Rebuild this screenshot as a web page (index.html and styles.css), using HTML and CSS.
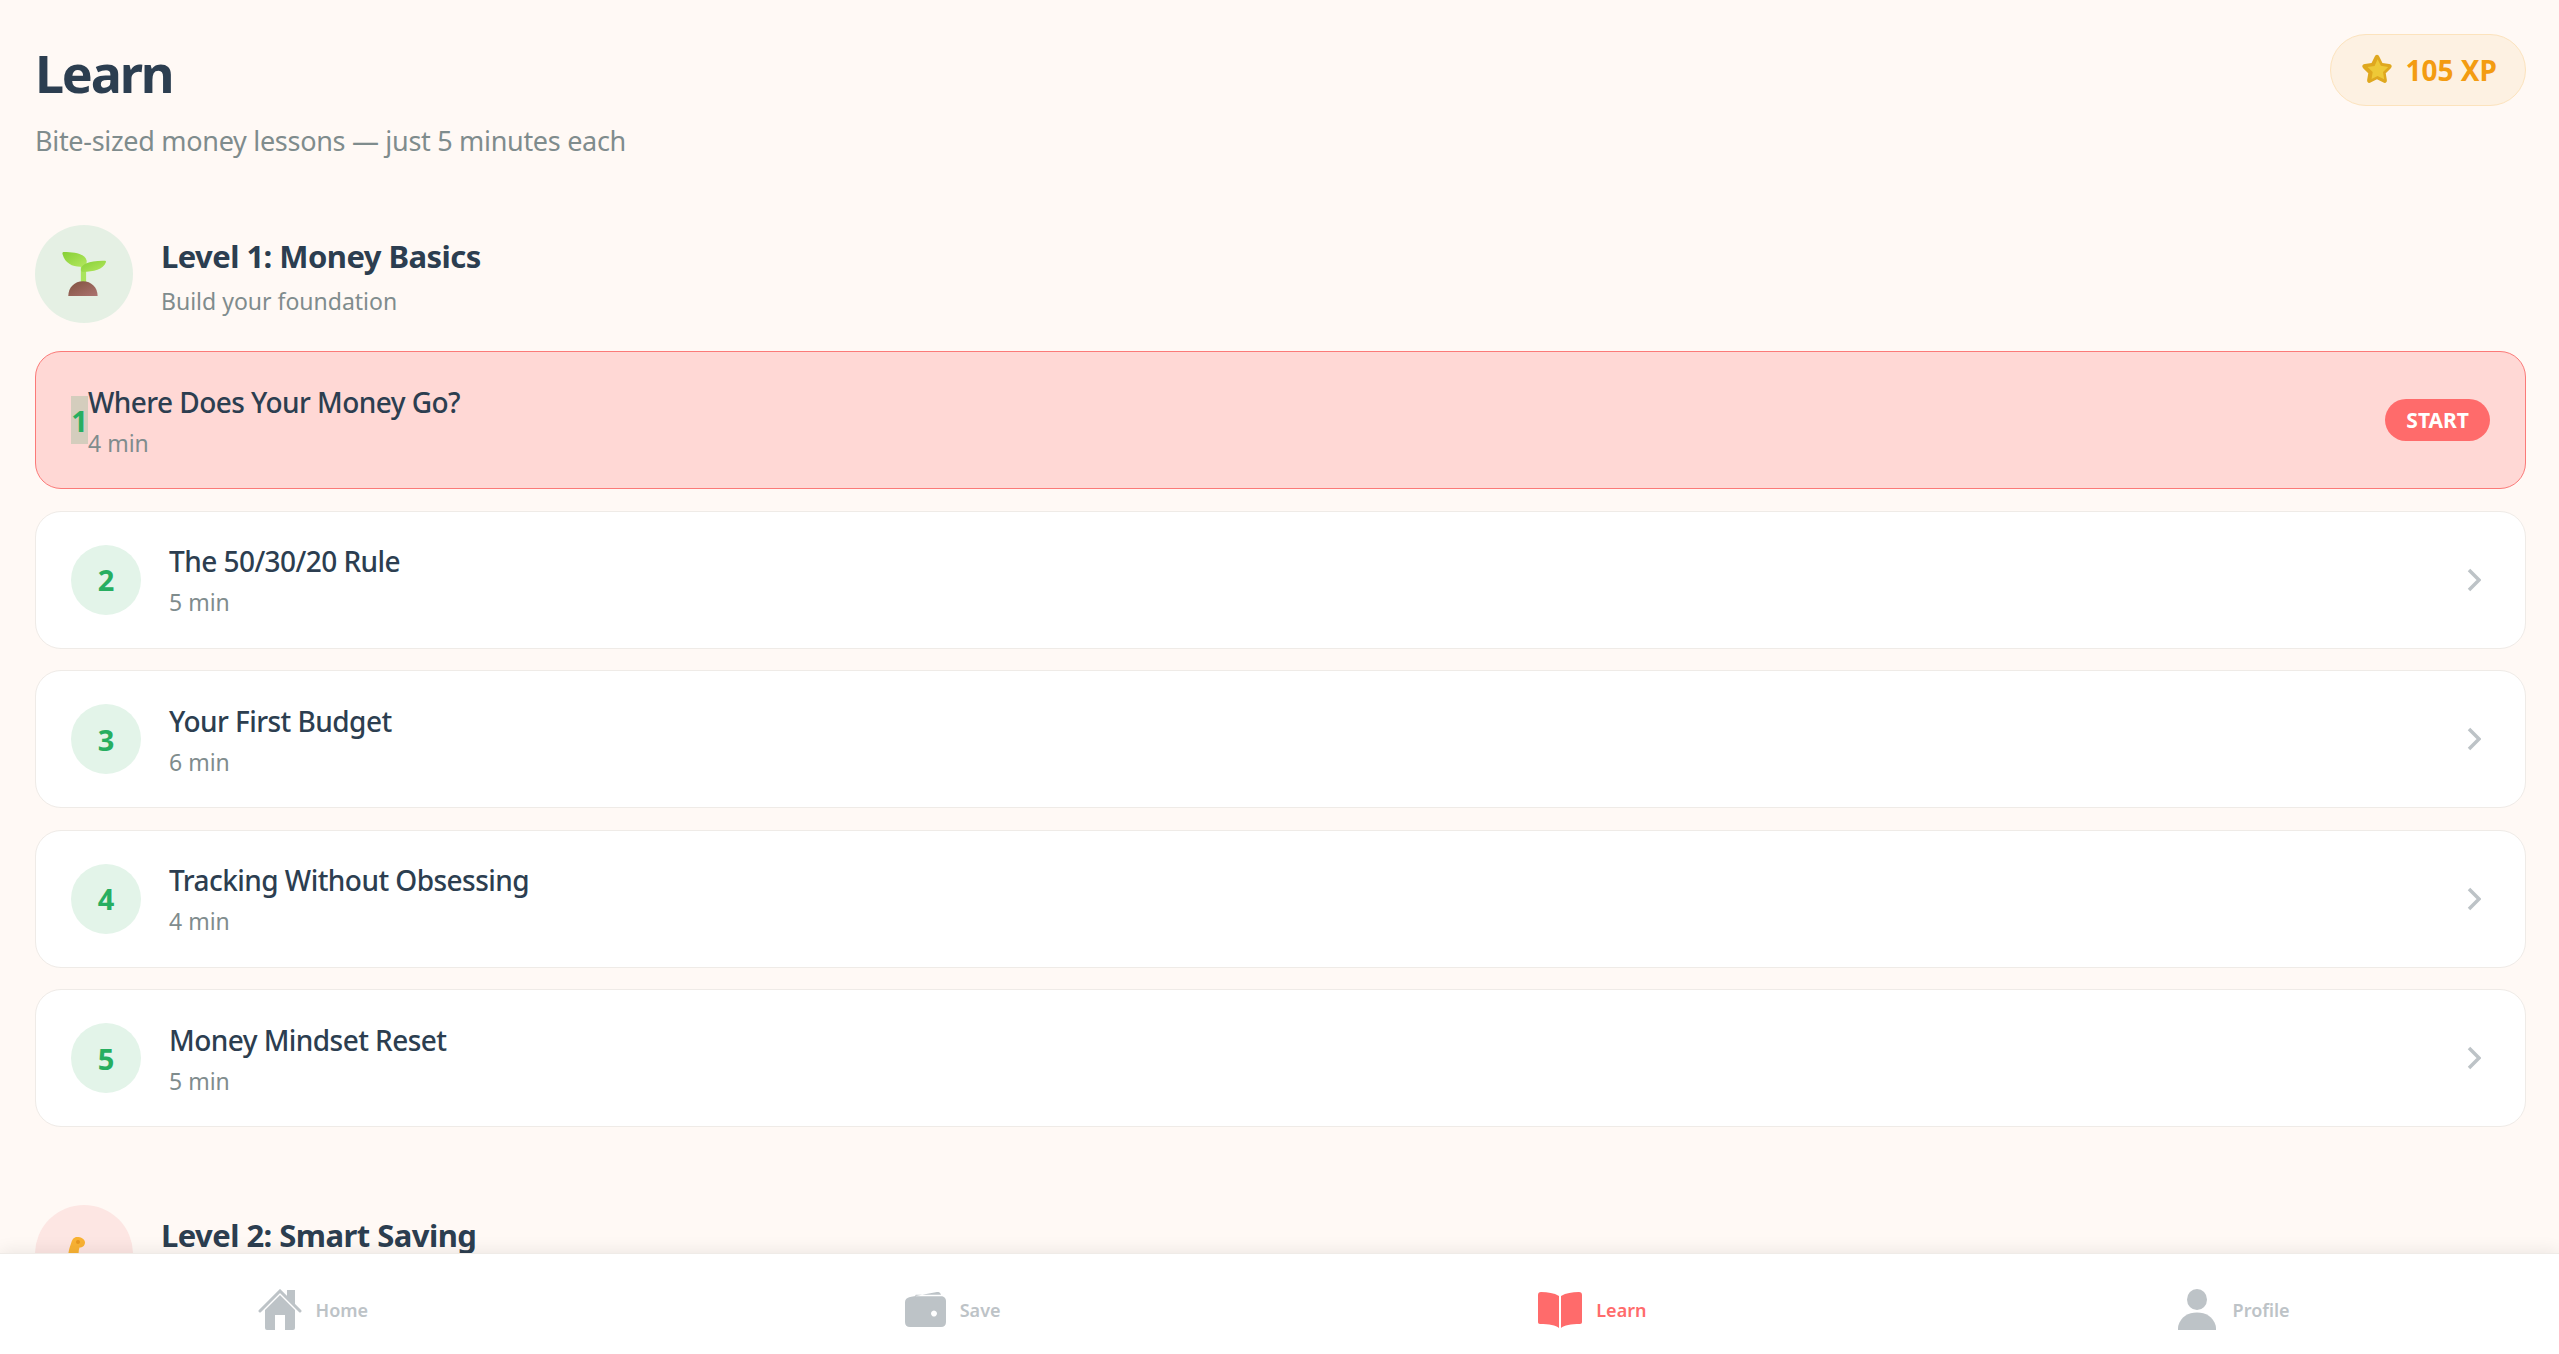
FILE: index.html
```html
<!DOCTYPE html>
<html>
<head>
    <title>Learn</title>
    <link rel="stylesheet" href="styles.css">
</head>
<body>
    <svg class="defs" width="0" height="0">
        <defs>
            <linearGradient id="leaf" x1="0" y1="0" x2="1" y2="1">
                <stop offset="0" stop-color="#86cf35"/>
                <stop offset="1" stop-color="#b4e85f"/>
            </linearGradient>
            <linearGradient id="soil" x1="0" y1="0" x2="1" y2="1">
                <stop offset="0" stop-color="#80513f"/>
                <stop offset="1" stop-color="#ac7370"/>
            </linearGradient>
        </defs>
    </svg>
    <main class="content">
        <header class="page-head">
            <div>
                <h1>Learn</h1>
                <p class="subtitle">Bite-sized money lessons — just 5 minutes each</p>
            </div>
            <div class="xp-badge">
                <svg class="star" viewBox="0 0 30 30">
                    <path d="M15 1.500c1 0 1.600.7 2.100 1.800l2.700 5.500 5.900.9c1.400.2 2.300.9 2.300 2 0 .7-.4 1.300-1 1.900l-4.300 4.200 1 6c.2 1.500-.6 2.600-1.800 2.600-.5 0-1-.2-1.600-.5L15 23.200l-5.300 2.700c-.6.300-1.100.5-1.600.5-1.200 0-2-1.100-1.800-2.600l1-6-4.300-4.200c-.6-.6-1-1.200-1-1.900 0-1.100.9-1.800 2.300-2l5.900-.9 2.700-5.500C13.400 2.200 14 1.500 15 1.500z" fill="#dfa81f"/>
                    <path d="M15.500 5.500l2.900 5.800 6.500 1-4.600 4.500 1 6.400-5.800-3-5.300 2.800 1-6.200-4.500-4.400 6.200-.9z" fill="#eec937"/>
                </svg>
                <span>105 XP</span>
            </div>
        </header>

        <section class="level">
            <div class="level-head">
                <div class="level-icon level-icon-green">
                    <svg class="emoji" viewBox="0 0 42 42">
                        <path d="M18 10h5v20h-5z" fill="#a9e45c"/>
                        <path d="M20.500 14C12 15 3 12 .5 2 .2.700.7 0 2 0c9 0 20 1.500 21.500 8 .5 2.500-1 5.500-3 6z" fill="url(#leaf)"/>
                        <path d="M18 17c.3-5.500 8-9 22.500-8.700 1.300 0 1.700.6 1.400 1.500C39.500 16.500 30 19 20 19c-1.300 0-2-.8-2-2z" fill="url(#leaf)"/>
                        <path d="M6 42c0-8 6-14 14-14s14 6 14 14z" fill="url(#soil)"/>
                    </svg>
                </div>
                <div>
                    <h2>Level 1: Money Basics</h2>
                    <p class="level-sub">Build your foundation</p>
                </div>
            </div>
            <div class="lessons">
                <div class="lesson lesson-current">
                    <div class="lesson-num">1</div>
                    <div class="lesson-text">
                        <div class="lesson-title">Where Does Your Money Go?</div>
                        <div class="lesson-time">4 min</div>
                    </div>
                    <div class="start-pill">START</div>
                </div>
                <div class="lesson">
                    <div class="lesson-num">2</div>
                    <div class="lesson-text">
                        <div class="lesson-title">The 50/30/20 Rule</div>
                        <div class="lesson-time">5 min</div>
                    </div>
                    <svg class="chevron" viewBox="0 0 14 24"><path d="M2 2l10 10L2 22"/></svg>
                </div>
                <div class="lesson">
                    <div class="lesson-num">3</div>
                    <div class="lesson-text">
                        <div class="lesson-title">Your First Budget</div>
                        <div class="lesson-time">6 min</div>
                    </div>
                    <svg class="chevron" viewBox="0 0 14 24"><path d="M2 2l10 10L2 22"/></svg>
                </div>
                <div class="lesson">
                    <div class="lesson-num">4</div>
                    <div class="lesson-text">
                        <div class="lesson-title">Tracking Without Obsessing</div>
                        <div class="lesson-time">4 min</div>
                    </div>
                    <svg class="chevron" viewBox="0 0 14 24"><path d="M2 2l10 10L2 22"/></svg>
                </div>
                <div class="lesson">
                    <div class="lesson-num">5</div>
                    <div class="lesson-text">
                        <div class="lesson-title">Money Mindset Reset</div>
                        <div class="lesson-time">5 min</div>
                    </div>
                    <svg class="chevron" viewBox="0 0 14 24"><path d="M2 2l10 10L2 22"/></svg>
                </div>
            </div>
        </section>

        <section class="level">
            <div class="level-head">
                <div class="level-icon level-icon-red">
                    <svg class="emoji" viewBox="0 0 44 44">
                        <path d="M6 27c0-7 1.500-11 3.500-17 .8-2.500 2.500-5 5.500-5 4 0 8 2 8 5.500 0 3-2.500 5-5.500 5-1 3-1 6-1 11.500z" fill="#f9b233"/>
                        <circle cx="16" cy="10" r="2" fill="#e8971f"/>
                    </svg>
                </div>
                <div>
                    <h2>Level 2: Smart Saving</h2>
                    <p class="level-sub">&nbsp;</p>
                </div>
            </div>
        </section>
    </main>

    <nav class="bottom-nav">
        <div class="nav-item">
            <svg class="nav-icon" viewBox="0 0 44 41">
                <path d="M7 21L22 6l15 15v18a2 2 0 0 1-2 2h-8V26H17v15H9a2 2 0 0 1-2-2z"/>
                <path d="M29 1h8v15l-8-8z"/>
                <path d="M2 22L22 2l20 20" class="roof"/>
            </svg>
            <span>Home</span>
        </div>
        <div class="nav-item">
            <svg class="nav-icon nav-icon-short" viewBox="0 0 41 36">
                <path d="M5 5l27-5c2-.3 3.500.7 4 2.800H11c-1 0-1 1.400 0 1.400h25c2.800 0 5 1.800 5 4.800v21c0 3.300-1.800 5-5 5H5c-3.200 0-5-1.700-5-5V10c0-2.500 2-4.400 5-5zm27 16.500a3 3 0 1 0 0 .1z" fill-rule="evenodd"/>
            </svg>
            <span>Save</span>
        </div>
        <div class="nav-item nav-active">
            <svg class="nav-icon nav-icon-short" viewBox="0 0 44 36">
                <path d="M3 0c7 .2 13 .9 18 4v32c-3-2.800-10-4-19-4-1.300 0-2-.7-2-2V3c0-2 1-3 3-3z"/>
                <path d="M41 0c-7 .2-13 .9-18 4v32c3-2.800 10-4 19-4 1.300 0 2-.7 2-2V3c0-2-1-3-3-3z"/>
            </svg>
            <span>Learn</span>
        </div>
        <div class="nav-item nav-item-profile">
            <svg class="nav-icon" viewBox="0 0 38 41">
                <ellipse cx="19" cy="10.500" rx="10" ry="10.500"/>
                <path d="M0 41c0-2 0-3 .5-5C3 28 10 23.500 19 23.500S35 28 37.500 36c.5 2 .5 3 .5 5z"/>
            </svg>
            <span>Profile</span>
        </div>
    </nav>
</body>
</html>
```

FILE: styles.css
```css
* {
    box-sizing: border-box;
}
html, body {
    height: 100%;
}
body {
    margin: 0;
    display: flex;
    flex-direction: column;
    overflow: hidden;
    font-family: "Noto Sans", sans-serif;
    background-color: #fff9f5;
    color: #2c3e50;
}
.defs {
    position: absolute;
}
.content {
    flex: 1;
    min-height: 0;
    overflow: hidden;
    padding: 34px 33px 0 35px;
}
.page-head {
    display: flex;
    justify-content: space-between;
    align-items: flex-start;
    margin-bottom: 64px;
}
h1 {
    margin: 0;
    padding-top: 2px;
    font-size: 52px;
    line-height: 74px;
    letter-spacing: -2.2px;
}
.subtitle {
    margin: 11px 0 0;
    font-size: 27px;
    line-height: 40px;
    letter-spacing: -0.3px;
    color: #7f8c8d;
}
.xp-badge {
    display: flex;
    align-items: center;
    gap: 12px;
    height: 72px;
    padding: 0 28px 0 29px;
    border: 1px solid #fce3bd;
    border-radius: 36px;
    background: #fdf1e2;
    color: #f39c12;
    font-size: 28px;
    font-weight: 700;
}
.star {
    width: 34px;
    height: 34px;
}
.level {
    margin-bottom: 77.6px;
}
.level-head {
    display: flex;
    align-items: center;
    gap: 28px;
    margin-bottom: 28px;
}
.level-icon {
    display: flex;
    align-items: center;
    justify-content: center;
    width: 98px;
    height: 98px;
    border-radius: 50%;
}
.level-icon-green {
    background: #e5f0e4;
}
.level-icon-red {
    background: #fde6e3;
}
.emoji {
    width: 44px;
    height: 44px;
}
h2 {
    margin: 0;
    padding-top: 2px;
    font-size: 31px;
    line-height: 44px;
    letter-spacing: -0.55px;
}
.level-sub {
    margin: 7px 0 0;
    font-size: 23px;
    line-height: 32px;
    color: #7f8c8d;
}
.lessons {
    display: flex;
    flex-direction: column;
    gap: 21.6px;
}
.lesson {
    display: flex;
    align-items: center;
    gap: 28px;
    height: 138px;
    padding: 0 35px;
    border: 1px solid #efebe7;
    border-radius: 26px;
    background: white;
}
.lesson-num {
    flex-shrink: 0;
    display: flex;
    align-items: center;
    justify-content: center;
    width: 70px;
    height: 70px;
    border-radius: 50%;
    background: #e3f4e9;
    color: #27ae60;
    font-size: 29px;
    font-weight: 700;
}
.lesson-text {
    flex: 1;
}
.lesson-title {
    padding-top: 4px;
    font-size: 28px;
    line-height: 40px;
    font-weight: 500;
    letter-spacing: -0.55px;
}
.lesson-time {
    margin-top: 1px;
    font-size: 23px;
    line-height: 40px;
    color: #7f8c8d;
}
.lesson-current {
    gap: 0;
    border-color: #fb7a78;
    background: #ffd8d5;
}
.lesson-current .lesson-num {
    width: 17px;
    height: 48px;
    border-radius: 0;
    background: #d4cdbd;
}
.start-pill {
    display: flex;
    align-items: center;
    height: 42px;
    padding: 0 21px;
    border-radius: 21px;
    background: #ff6b6b;
    color: white;
    font-size: 21px;
    font-weight: 700;
}
.chevron {
    width: 14px;
    height: 24px;
    margin-right: 9px;
    fill: none;
    stroke: #bdc3c7;
    stroke-width: 3.5;
}
.bottom-nav {
    position: relative;
    display: grid;
    grid-template-columns: repeat(4, 1fr);
    height: 101px;
    padding-top: 11px;
    background: white;
    box-shadow: 0 -2px 16px rgba(0,0,0,0.08);
    border-top: 1px solid #efebe7;
}
.nav-item {
    display: flex;
    align-items: center;
    justify-content: center;
    gap: 14px;
    padding-right: 14px;
    color: #bdc3c7;
    font-size: 18px;
    font-weight: 600;
}
.nav-item-profile {
    gap: 17px;
    padding-right: 11px;
}
.nav-icon {
    height: 41px;
    fill: #bdc3c7;
}
.nav-icon-short {
    height: 36px;
}
.roof {
    fill: none;
    stroke: #bdc3c7;
    stroke-width: 3;
    stroke-linecap: round;
}
.nav-active {
    color: #ff6b6b;
}
.nav-active .nav-icon {
    fill: #ff6b6b;
}
```
